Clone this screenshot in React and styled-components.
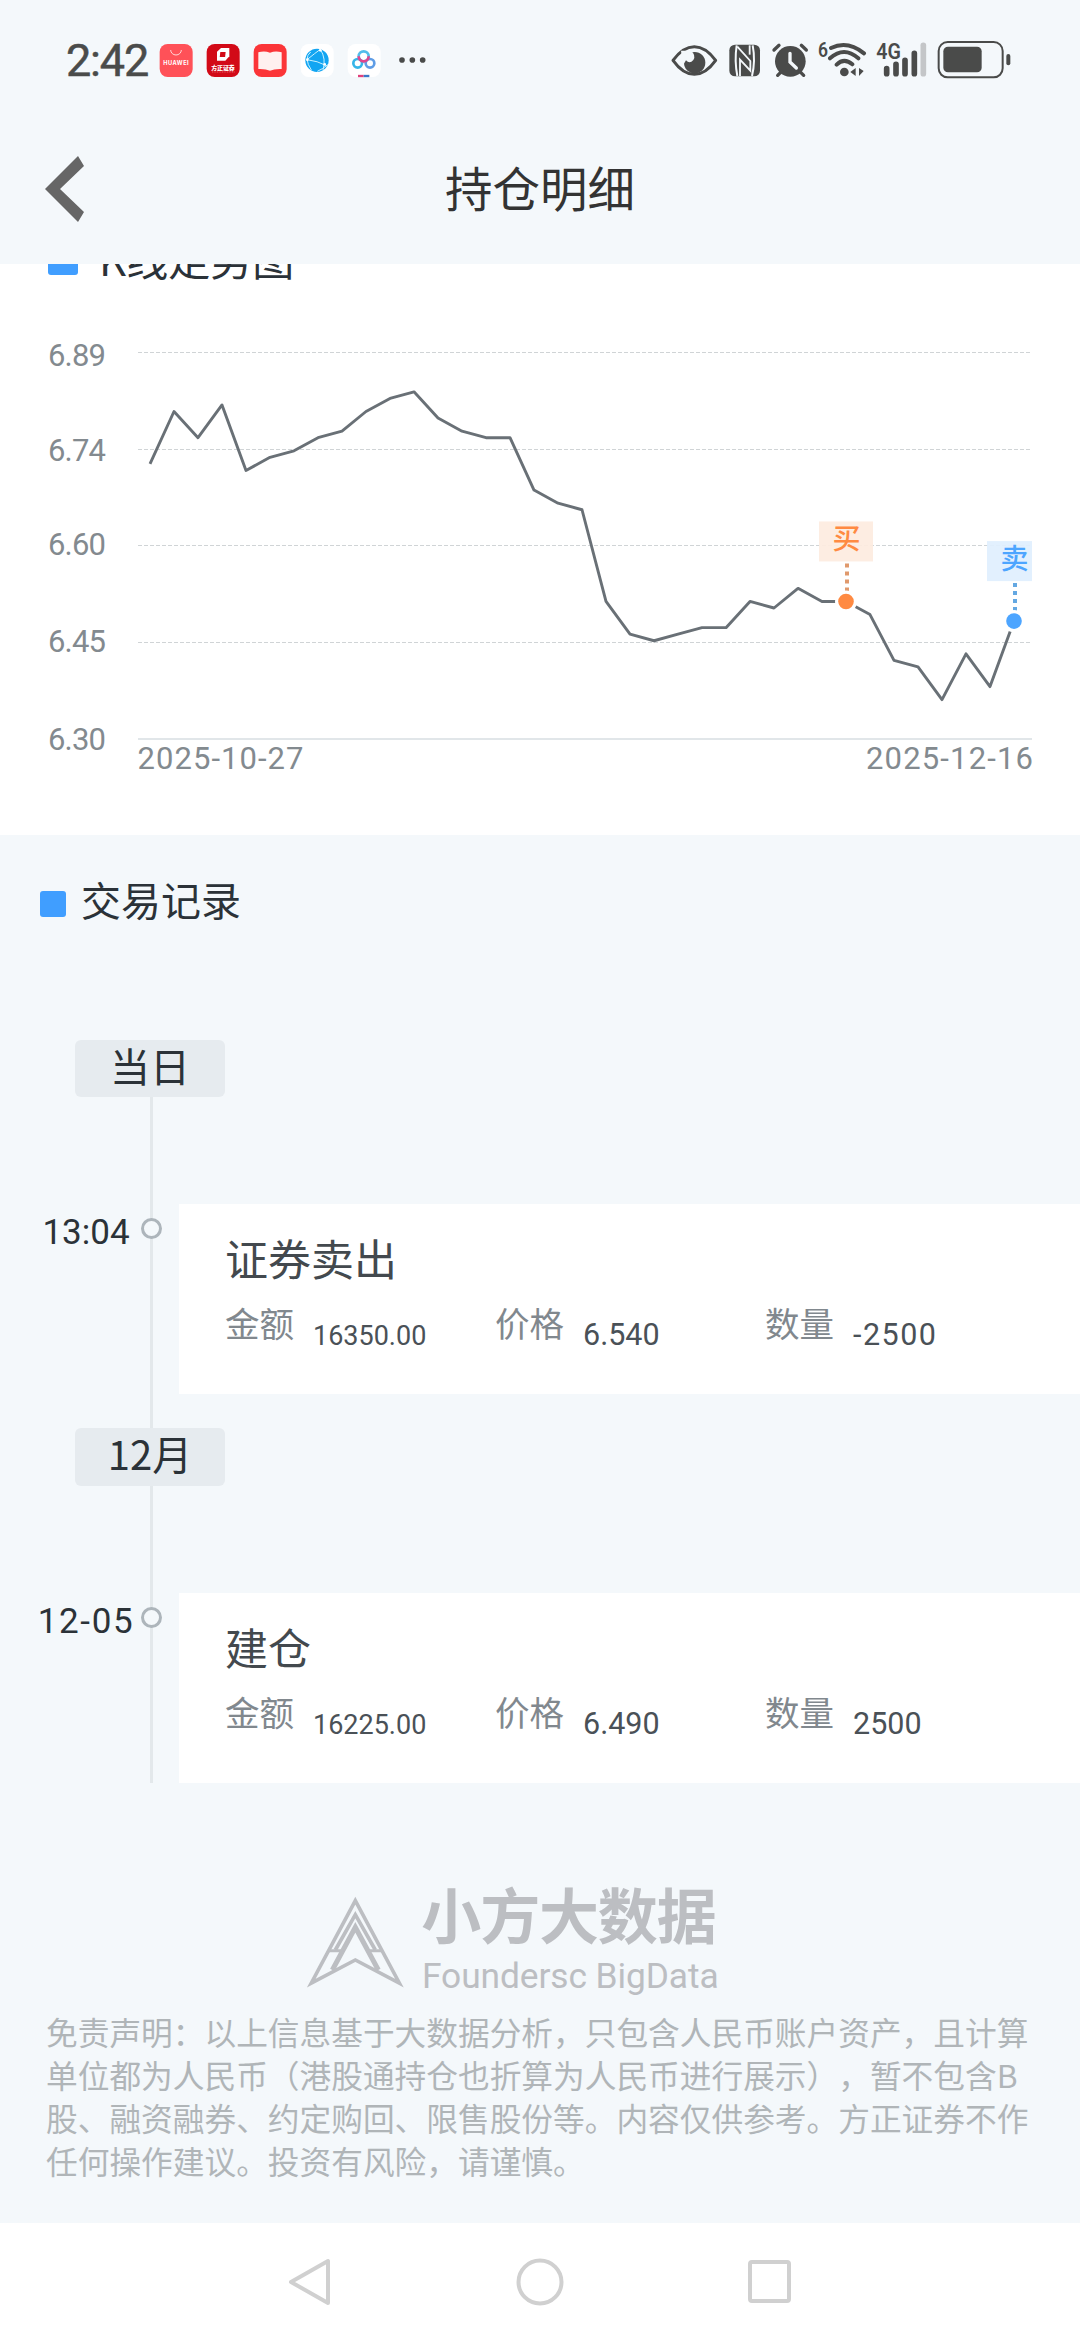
import styled, { createGlobalStyle } from 'styled-components';

const GlobalStyle = createGlobalStyle`
  * {
    box-sizing: border-box;
  }
  body {
    margin: 0;
    background: #f4f8fb;
    font-family: 'Noto Sans CJK SC', sans-serif;
    text-spacing-trim: space-all;
  }
`;

const Screen = styled.div`
  display: flex;
  flex-direction: column;
  width: 1080px;
  height: 2340px;
  overflow: hidden;
  background: #f4f8fb;
`;

const StatusBar = styled.div`
  display: flex;
  align-items: center;
  justify-content: space-between;
  height: 112px;
  padding: 8px 68px 0 66px;
  color: #4a4b4a;
`;

const StatusGroup = styled.div`
  display: flex;
  align-items: center;
`;

const Clock = styled.div`
  width: 87px;
  padding-top: 2px;
  font: 400 45px/54px Roboto, sans-serif;
  letter-spacing: -1.2px;
  -webkit-text-stroke: 0.5px #4a4b4a;
  white-space: nowrap;
`;

const Glyph = styled.svg`
  display: block;
  flex: none;
  height: 40px;
`;

const Header = styled.header`
  display: grid;
  grid-template-columns: 120px 1fr 120px;
  align-items: center;
  height: 152px;
`;

const BackIcon = styled.svg`
  width: 42px;
  height: 68px;
  margin: 2px 0 0 44px;
`;

const Title = styled.h1`
  margin: -2px 0 0;
  font-size: 47.5px;
  font-weight: 400;
  line-height: 60px;
  text-align: center;
  color: #333;
`;

const ChartSection = styled.section`
  height: 571px;
  overflow: hidden;
  background: #fff;
`;

const Heading = styled.h2`
  display: flex;
  align-items: center;
  gap: ${(p) => (p.$large ? 21 : 15)}px;
  height: 60px;
  margin: ${(p) => (p.$large ? '-34px 0 0 48px' : '0 0 106px 40px')};
  font-size: ${(p) => (p.$large ? 42 : 40)}px;
  font-weight: 400;
  line-height: 50px;
  color: #2b3238;

  &::before {
    content: '';
    width: ${(p) => (p.$large ? 30 : 26)}px;
    height: ${(p) => (p.$large ? 30 : 26)}px;
    border-radius: 3px;
    background: #409eff;
  }
`;

const HeadingText = styled.span`
  margin-top: ${(p) => (p.$low ? -5 : -10)}px;
`;

const ChartSvg = styled.svg`
  display: block;
  font-family: Roboto, sans-serif;
`;

const Records = styled.section`
  padding-top: 39px;
`;

const Timeline = styled.div`
  background: linear-gradient(#e3e8eb, #e3e8eb) 150px 0 / 3px 100% no-repeat;
`;

const Group = styled.div`
  & + & {
    padding-top: 34px;
  }
`;

const DateTag = styled.div`
  width: 150px;
  height: ${(p) => (p.$first ? 57 : 58)}px;
  margin-left: 75px;
  border-radius: 6px;
  background: #e6ebef;
  font-size: 40px;
  line-height: 50px;
  text-align: center;
  color: #2b3238;
`;

const Entry = styled.div`
  display: flex;
  align-items: flex-start;
  margin-top: 107px;
`;

const Time = styled.div`
  width: 141px;
  padding: 9px 0 0 31px;
  font: 400 35px/40px Roboto, sans-serif;
  letter-spacing: ${(p) => (p.$wide ? 1.6 : 0)}px;
  text-align: center;
  color: #2b3238;
`;

const Dot = styled.div`
  width: 21px;
  height: 21px;
  margin: 14px 17px 0 0;
  border: 3px solid #adb5bb;
  border-radius: 50%;
  background: #f4f8fb;
`;

const Card = styled.div`
  flex: 1;
  height: 190px;
  padding: 23px 0 0 46px;
  background: #fff;
`;

const CardTitle = styled.div`
  font-size: 43px;
  line-height: 60px;
  color: #43494e;
`;

const Fields = styled.div`
  display: grid;
  grid-template-columns: 270px 270px 1fr;
  margin-top: 15px;
`;

const Field = styled.div`
  display: flex;
  gap: 19px;
`;

const Label = styled.span`
  font-size: 34.5px;
  line-height: 40px;
  color: #81888e;
`;

const Value = styled.span`
  margin-top: ${(p) => (p.$small ? 14 : 13)}px;
  font: 400 ${(p) => (p.$small ? 27 : 30.5)}px/40px Roboto, sans-serif;
  letter-spacing: ${(p) => (p.$wide ? 1.5 : 0)}px;
  color: #4a5157;
`;

const Footer = styled.footer`
  flex: 1;
  padding: 97px 46px 0;
`;

const Brand = styled.svg`
  display: block;
  width: 480px;
  height: 120px;
  margin-left: 234px;
`;

const Disclaimer = styled.p`
  margin: 10px 0 0;
  font-size: 31.7px;
  line-height: 43px;
  white-space: nowrap;
  color: #b0b5b8;
`;

const NavBar = styled.nav`
  display: flex;
  align-items: center;
  justify-content: center;
  gap: 180px;
  height: 117px;
  background: #fff;
`;

const PRICES = [
  6.72, 6.8, 6.76, 6.81, 6.71, 6.73, 6.74, 6.76, 6.77, 6.8, 6.82, 6.83, 6.79,
  6.77, 6.76, 6.76, 6.68, 6.66, 6.65, 6.51, 6.46, 6.45, 6.46, 6.47, 6.47, 6.51,
  6.5, 6.53, 6.51, 6.51, 6.49, 6.42, 6.41, 6.36, 6.43, 6.38, 6.48,
];

const TICKS = [
  { label: '6.89', y: 62.5, text: 75.5 },
  { label: '6.74', y: 159.5, text: 171 },
  { label: '6.60', y: 255.5, text: 265 },
  { label: '6.45', y: 352.5, text: 361.5 },
];

const MARKS = [
  { index: 29, text: '买', color: '#ff8a42', dots: '#e0996c', tag: '#fdebe0', width: 54 },
  { index: 36, text: '卖', color: '#4da5ff', dots: '#64a8e2', tag: '#e0effe', width: 45 },
];

const BASELINE = 449;
const px = (i) => 150 + i * 24;
const py = (v) => BASELINE - (v - 6.3) * 655;

function TradeMark({ index, text, color, dots, tag, width }) {
  const x = px(index);
  const y = py(PRICES[index]);
  return (
    <g>
      <rect x={x - 27} y={y - 80} width={width} height="40" fill={tag} fillOpacity="0.92" />
      <text x={x + 0.5} y={y - 52} fill={color} fontSize="28" textAnchor="middle" fontFamily="Noto Sans CJK SC" fontWeight="500">
        {text}
      </text>
      <line x1={x + 1} x2={x + 1} y1={y - 38} y2={y - 9} stroke={dots} strokeWidth="4" strokeDasharray="4 4" />
      <circle cx={x} cy={y} r="11" fill="#fff" />
      <circle cx={x} cy={y} r="7.8" fill={color} />
    </g>
  );
}

function Chart() {
  const points = PRICES.map((v, i) => `${px(i)},${py(v)}`).join(' ');
  return (
    <ChartSvg width="1080" height="545" viewBox="0 0 1080 545">
      {TICKS.map((t) => (
        <g key={t.label}>
          <line x1="138" x2="1031" y1={t.y} y2={t.y} stroke="#d0d4d6" strokeDasharray="4 2" />
          <text x="48" y={t.text} fontSize="31" fill="#838a8f" textLength="58">
            {t.label}
          </text>
        </g>
      ))}
      <rect x="138" y="448" width="894" height="2" fill="#e1e6e9" />
      <text x="48" y="460" fontSize="31" fill="#838a8f" textLength="58">6.30</text>
      <text x="137.5" y="479" fontSize="31" fill="#838a8f" textLength="166">2025-10-27</text>
      <text x="866" y="479" fontSize="31" fill="#838a8f" textLength="167">2025-12-16</text>
      <polyline points={points} fill="none" stroke="#697076" strokeWidth="2.9" strokeLinejoin="round" />
      {MARKS.map((m) => (
        <TradeMark key={m.index} {...m} />
      ))}
    </ChartSvg>
  );
}

function AppIcon({ fill, children }) {
  return (
    <Glyph width="47" viewBox="0 60 141 120">
      <rect x="20" y="72" width="99" height="99" rx="24" fill={fill} />
      {children}
    </Glyph>
  );
}

function AppIcons() {
  return (
    <>
      <AppIcon fill="#ff5158">
        <path d="M53 90a16 15 0 0 0 32 0" fill="none" stroke="#ffd5d5" strokeWidth="3" />
        <text x="69" y="135" fontSize="17" fontWeight="700" fill="#fff" textAnchor="middle" textLength="76" fontFamily="Inter">
          HUAWEI
        </text>
      </AppIcon>
      <AppIcon fill="#d20a17">
        <path d="M51 95l12-11h25v25l-12 13H51z" fill="#fff" />
        <path d="M61 96h16v15H61z" fill="#d20a17" transform="skewX(-6) translate(10 0)" />
        <text x="69" y="150" fontSize="18" fontWeight="900" fill="#fff" textAnchor="middle" textLength="70" fontFamily="Noto Sans CJK SC">
          方正证券
        </text>
        <path d="M36 156h68" stroke="#ee8a90" strokeWidth="2" strokeDasharray="3 2" />
      </AppIcon>
      <AppIcon fill="#fb3538">
        <path d="M34 97q18-6 35 1q17-7 35-1v50q-22-1-35 5q-13-6-35-5z" fill="#fff0ef" />
      </AppIcon>
      <AppIcon fill="#fff">
        <circle cx="69" cy="121" r="35" fill="#12a5f2" />
        <g fill="none" stroke="#c8f1ff" strokeWidth="3">
          <path d="M79 88q-14 10-40 31M39 119q30 3 61 19M79 88q18 28 8 62M50 96q-22 18 2 54M70 154q14-6 32-20" />
        </g>
        <circle cx="79" cy="91" r="4" fill="#fff" />
        <circle cx="40" cy="119" r="4" fill="#fff" />
        <circle cx="92" cy="133" r="4" fill="#fff" />
      </AppIcon>
      <AppIcon fill="#fff">
        <g fill="none" strokeWidth="8">
          <circle cx="50" cy="130" r="13" stroke="#35b5e8" />
          <circle cx="87" cy="130" r="13" stroke="#5f9de6" />
          <circle cx="68" cy="109" r="15" stroke="#53bdeb" />
          <path d="M53 109a15 15 0 0 0 30 0" stroke="#e0458d" />
        </g>
        <path d="M51 168h17" stroke="#e0407c" strokeWidth="7" />
        <path d="M68 168h17" stroke="#3a78c9" strokeWidth="7" />
      </AppIcon>
      <Glyph width="40" viewBox="0 60 120 120" fill="#4a4b4a">
        <circle cx="42" cy="120" r="8.5" />
        <circle cx="73" cy="120" r="8.5" />
        <circle cx="104" cy="120" r="8.5" />
      </Glyph>
    </>
  );
}

function SystemIcons() {
  return (
    <>
      {/* eye comfort */}
      <Glyph width="58" viewBox="80 60 174 120">
        <path
          d="M92 121Q122 80 156 80T220 121Q190 163 156 163T92 121z"
          fill="none"
          stroke="#4a4b4a"
          strokeWidth="9"
          strokeLinejoin="round"
        />
        <circle cx="157" cy="128" r="32" fill="#4a4b4a" />
        <path d="M116 92H146Q162 106 153 120Q142 133 131 121L122 136Z" fill="#f4f8fb" />
      </Glyph>
      {/* nfc */}
      <Glyph width="42" viewBox="254 60 126 120">
        <rect x="261" y="74" width="92" height="95" rx="17" fill="#4a4b4a" />
        <g fill="none" stroke="#f4f8fb" strokeWidth="6">
          <path d="M283 76Q276 122 285 168M331 76Q340 122 329 168" />
          <path d="M285 80L324 123V152L293 119V168" strokeWidth="5.5" />
          <path d="M322 76V104" strokeWidth="5.5" />
        </g>
      </Glyph>
      {/* alarm */}
      <Glyph width="48" viewBox="380 60 144 120">
        <circle cx="444" cy="124" r="46" fill="#4a4b4a" />
        <path d="M395 90l15-14M492 90l-15-14M406 166l12-12M484 166l-12-12" stroke="#4a4b4a" strokeWidth="10" strokeLinecap="round" />
        <path d="M443 100v26l19 18" fill="none" stroke="#f4f8fb" strokeWidth="10" strokeLinecap="round" />
      </Glyph>
      {/* wifi 6 */}
      <Glyph width="58" viewBox="524 60 174 120">
        <text x="527" y="111" fontSize="60" fontWeight="600" fill="#4a4b4a" textLength="30" lengthAdjust="spacingAndGlyphs" fontFamily="Roboto">
          6
        </text>
        <g fill="none" stroke="#4a4b4a" strokeWidth="12" strokeLinecap="round">
          <path d="M566 84q50-24 99 16M563 115q42-38 85 0M583 134q22-22 47-1" />
        </g>
        <circle cx="606" cy="156" r="13" fill="#4a4b4a" />
        <path d="M624 156l16-12v24zM664 153l-14-9v24z" fill="#4a4b4a" />
      </Glyph>
      {/* mobile signal */}
      <Glyph width="60" viewBox="698 60 180 120">
        <text x="702" y="116" fontSize="66" fontWeight="600" fill="#4a4b4a" textLength="74" lengthAdjust="spacingAndGlyphs" fontFamily="Roboto">
          4G
        </text>
        <g stroke="#4a4b4a" strokeWidth="17" strokeLinecap="round">
          <path d="M733 146v15M761 133v28M788 121v40M816 100v61" />
          <path d="M843 76v85" stroke="#c4c6c8" />
        </g>
      </Glyph>
      {/* battery */}
      <Glyph width="77" viewBox="880 60 231 120">
        <rect x="891" y="66" width="192" height="106" rx="27" fill="none" stroke="#4a4b4a" strokeWidth="6" />
        <rect x="905" y="80" width="115" height="77" rx="14" fill="#4a4b4a" />
        <path d="M1100 108v22" stroke="#4a4b4a" strokeWidth="12" strokeLinecap="round" />
      </Glyph>
    </>
  );
}

function BrandLogo() {
  return (
    <Brand viewBox="0 60 1440 360">
      <g fill="none" stroke="#bcbec2" strokeWidth="11">
        <path d="M226 122L94 369L226 300L358 369Z" />
        <path d="M166 270L226 164L286 270" />
        <path d="M157 330L226 202L295 330" strokeWidth="15" />
        <path d="M146 272H190M262 272H306" strokeWidth="9" />
      </g>
      <g fill="#bcbec2">
        <text x="424" y="238" fontSize="180" fontWeight="700" textLength="886" fontFamily="Noto Sans CJK SC">
          小方大数据
        </text>
        <text x="426" y="383" fontSize="106" textLength="890" fontFamily="Roboto">
          Foundersc BigData
        </text>
      </g>
    </Brand>
  );
}

const RECORDS = [
  { date: '当日', time: '13:04', title: '证券卖出', amount: '16350.00', price: '6.540', count: '-2500' },
  { date: '12月', time: '12-05', title: '建仓', amount: '16225.00', price: '6.490', count: '2500' },
];

function Record({ date, time, title, amount, price, count, first }) {
  return (
    <Group>
      <DateTag $first={first}>{date}</DateTag>
      <Entry>
        <Time $wide={time.includes('-')}>{time}</Time>
        <Dot />
        <Card>
          <CardTitle>{title}</CardTitle>
          <Fields>
            <Field>
              <Label>金额</Label>
              <Value $small>{amount}</Value>
            </Field>
            <Field>
              <Label>价格</Label>
              <Value>{price}</Value>
            </Field>
            <Field>
              <Label>数量</Label>
              <Value $wide={count.startsWith('-')}>{count}</Value>
            </Field>
          </Fields>
        </Card>
      </Entry>
    </Group>
  );
}

export default function App() {
  return (
    <Screen>
      <GlobalStyle />
      <StatusBar>
        <StatusGroup>
          <Clock>2:42</Clock>
          <AppIcons />
        </StatusGroup>
        <StatusGroup>
          <SystemIcons />
        </StatusGroup>
      </StatusBar>
      <Header>
        <BackIcon viewBox="0 0 42 68">
          <path d="M34 1L40 11L16 34L40 57L34 67L1 34Z" fill="#666" />
        </BackIcon>
        <Title>持仓明细</Title>
      </Header>
      <ChartSection>
        <Heading $large>
          <HeadingText $low>K线走势图</HeadingText>
        </Heading>
        <Chart />
      </ChartSection>
      <Records>
        <Heading>
          <HeadingText>交易记录</HeadingText>
        </Heading>
        <Timeline>
          {RECORDS.map((r, i) => (
            <Record key={r.time} first={i === 0} {...r} />
          ))}
        </Timeline>
      </Records>
      <Footer>
        <BrandLogo />
        <Disclaimer>
          免责声明：以上信息基于大数据分析，只包含人民币账户资产，且计算
          <br />
          单位都为人民币（港股通持仓也折算为人民币进行展示），暂不包含B
          <br />
          股、融资融券、约定购回、限售股份等。内容仅供参考。方正证券不作
          <br />
          任何操作建议。投资有风险，请谨慎。
        </Disclaimer>
      </Footer>
      <NavBar>
        <svg width="50" height="50" viewBox="0 0 50 50" fill="none" stroke="#d0d0d0" strokeWidth="4" strokeLinejoin="round">
          <path d="M43 4V46L6 25Z" />
        </svg>
        <svg width="50" height="50" viewBox="0 0 50 50" fill="none" stroke="#d0d0d0" strokeWidth="4">
          <circle cx="25" cy="25" r="21.5" />
        </svg>
        <svg width="50" height="50" viewBox="0 0 50 50" fill="none" stroke="#d0d0d0" strokeWidth="4">
          <rect x="5" y="5" width="39" height="39" rx="2" />
        </svg>
      </NavBar>
    </Screen>
  );
}
